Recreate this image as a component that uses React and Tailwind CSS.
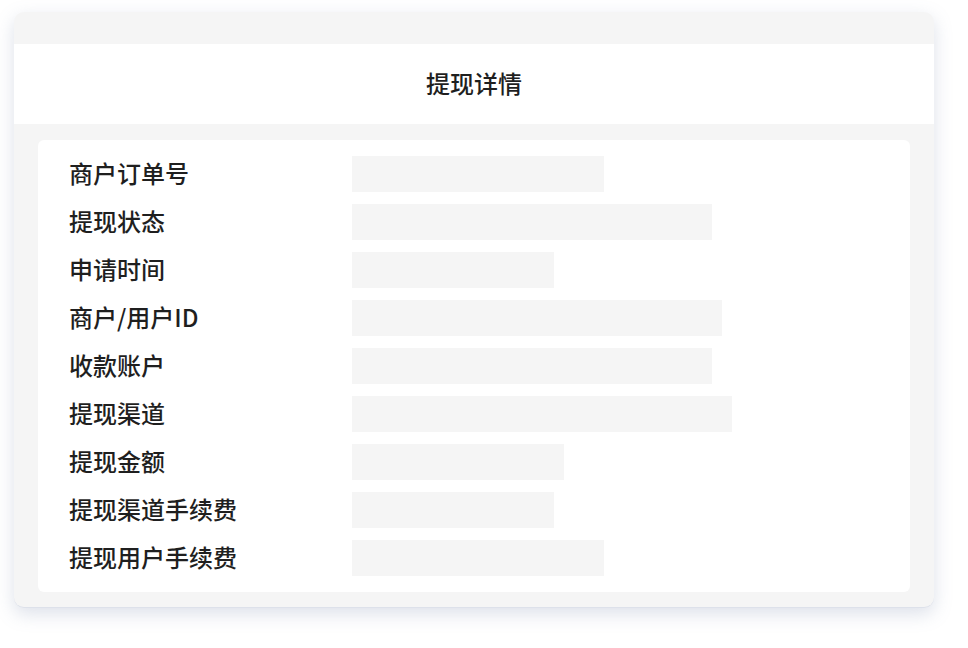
const rows = [
  { label: "商户订单号", w: 252 },
  { label: "提现状态", w: 360 },
  { label: "申请时间", w: 202 },
  { label: "商户/用户ID", w: 370 },
  { label: "收款账户", w: 360 },
  { label: "提现渠道", w: 380 },
  { label: "提现金额", w: 212 },
  { label: "提现渠道手续费", w: 202 },
  { label: "提现用户手续费", w: 252 },
]

function Row({ label, w }) {
  return (
    <div className="flex items-center h-9">
      <div className="w-[314px] pl-[31px] pb-[3px] text-[24px] leading-[33px] font-medium text-[#1f1f1f]">{label}</div>
      <div className="h-9 bg-[#f5f5f5]" style={{ width: w }}></div>
    </div>
  )
}

export default function App() {
  return (
    <div
      className="w-[968px] h-[648px] bg-white pt-[12px] pl-[14px]"
      style={{ fontFamily: '"Noto Sans CJK SC", "Noto Sans", sans-serif' }}
    >
      <div className="w-[920px] rounded-[10px] bg-[#f5f5f5] overflow-hidden shadow-[0_6px_18px_rgba(120,135,170,0.25)] border-b border-[#dde1ea]">
        <div className="h-[32px]"></div>
        <div className="h-[80px] bg-white flex items-center justify-center pb-[3px] text-[24px] font-medium text-[#1f1f1f]">
          提现详情
        </div>
        <div className="px-6 pt-4 pb-[15px]">
          <div className="bg-white rounded-md py-4 flex flex-col gap-3">
            {rows.map((r) => (
              <Row key={r.label} label={r.label} w={r.w} />
            ))}
          </div>
        </div>
      </div>
    </div>
  )
}
